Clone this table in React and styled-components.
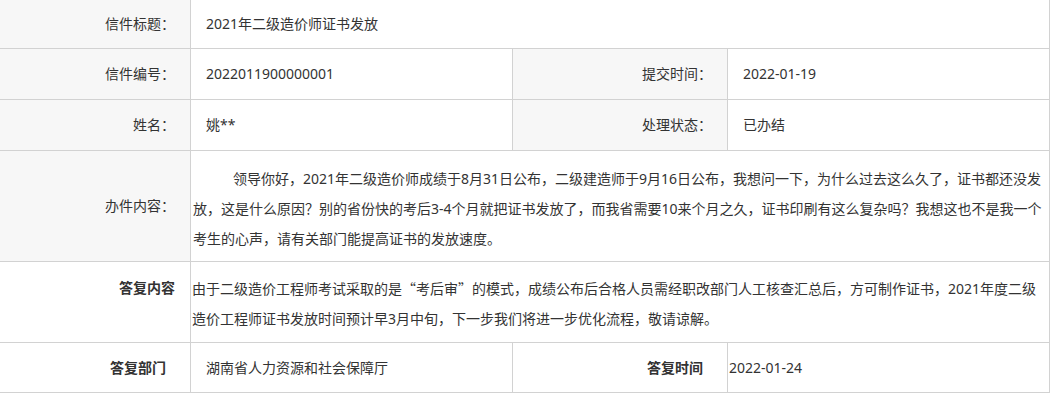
import React from 'react';
import styled, { createGlobalStyle } from 'styled-components';

const GlobalStyle = createGlobalStyle`
  * {
    box-sizing: border-box;
  }
  body {
    margin: 0;
    background: #ffffff;
    font-family: 'Noto Sans', 'Noto Sans CJK SC', sans-serif;
    font-size: 14px;
    color: #333333;
  }
`;

const Sheet = styled.div`
  display: grid;
  grid-template-columns: 191px 322px 215px 322px;
  grid-template-rows: 49px 51px 51px 111px 81px 50px;
  width: 1050px;
`;

const Cell = styled.div`
  border-right: 1px solid #d2d2d2;
  border-bottom: 1px solid #d2d2d2;
  grid-column: span ${(p) => p.span || 1};
  line-height: 30px;
  white-space: nowrap;
  overflow: hidden;
`;

const Label = styled(Cell)`
  display: flex;
  justify-content: flex-end;
  align-items: ${(p) => (p.top ? 'flex-start' : 'center')};
  padding: ${(p) => (p.top ? '11px' : '0')} ${(p) => p.pr || 15}px 0 0;
  background: ${(p) => (p.plain ? '#ffffff' : '#f7f7f7')};
  font-weight: ${(p) => (p.plain ? 700 : 400)};
`;

const Value = styled(Cell)`
  display: flex;
  align-items: center;
  padding-left: ${(p) => (p.pl === undefined ? 15 : p.pl)}px;
`;

const Letter = styled(Cell)`
  padding: 13px 0 0 2px;
  text-indent: 40px;
`;

const Reply = styled(Cell)`
  padding: 11px 0 0 1px;
`;

// full-width quotes, as the CJK face draws them
const Quote = styled.span`
  font-family: 'Noto Sans CJK SC', sans-serif;
`;

export default function App() {
  return (
    <>
      <GlobalStyle />
      <Sheet>
        <Label>信件标题：</Label>
        <Value span={3}>2021年二级造价师证书发放</Value>

        <Label>信件编号：</Label>
        <Value>2022011900000001</Value>
        <Label>提交时间：</Label>
        <Value>2022-01-19</Value>

        <Label>姓名：</Label>
        <Value>姚**</Value>
        <Label>处理状态：</Label>
        <Value>已办结</Value>

        <Label>办件内容：</Label>
        <Letter span={3}>
          领导你好，2021年二级造价师成绩于8月31日公布，二级建造师于9月16日公布，我想问一下，为什么过去这么久了，证书都还没发
          <br />
          放，这是什么原因？别的省份快的考后3-4个月就把证书发放了，而我省需要10来个月之久，证书印刷有这么复杂吗？我想这也不是我一个
          <br />
          考生的心声，请有关部门能提高证书的发放速度。
        </Letter>

        <Label plain top>答复内容</Label>
        <Reply span={3}>
          由于二级造价工程师考试采取的是<Quote>“考后审”</Quote>的模式，成绩公布后合格人员需经职改部门人工核查汇总后，方可制作证书，2021年度二级
          <br />
          造价工程师证书发放时间预计早3月中旬，下一步我们将进一步优化流程，敬请谅解。
        </Reply>

        <Label plain pr={24}>答复部门</Label>
        <Value>湖南省人力资源和社会保障厅</Value>
        <Label plain pr={24}>答复时间</Label>
        <Value pl={1}>2022-01-24</Value>
      </Sheet>
    </>
  );
}
